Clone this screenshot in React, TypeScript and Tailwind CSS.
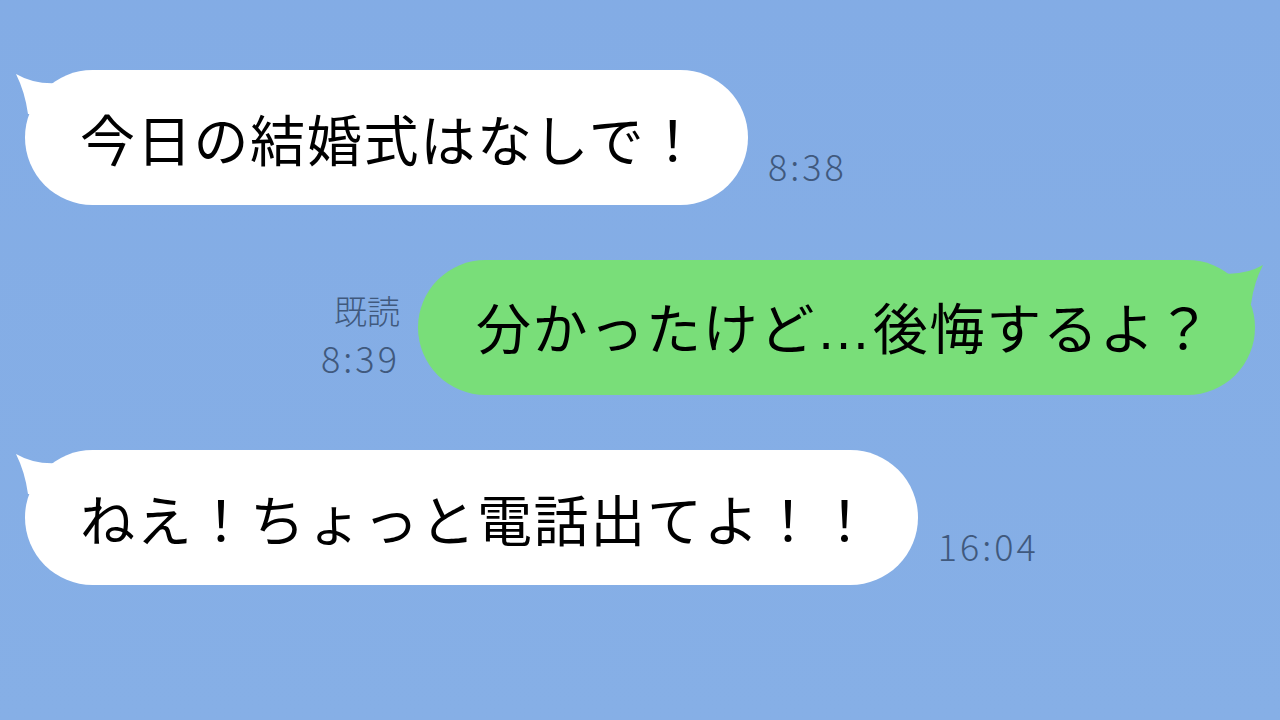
const jp = "font-['Noto_Sans_CJK_JP','Noto_Sans',sans-serif]";

function TailLeft({ color }: { color: string }) {
  return (
    <svg className="absolute left-[-10px] top-0" width="50" height="50" viewBox="0 0 50 50">
      <path d="M1 4 Q10 22 13 44 L44 44 L44 13 Q20 15 1 4 Z" fill={color} />
    </svg>
  );
}

function TailRight({ color }: { color: string }) {
  return (
    <svg className="absolute right-[-9px] top-0" width="50" height="50" viewBox="0 0 50 50">
      <path d="M49 5 Q40 22 37 44 L6 44 L6 13 Q30 16 49 5 Z" fill={color} />
    </svg>
  );
}

function Bubble({ children, side, pl, pr }: { children: React.ReactNode; side: 'left' | 'right'; pl: string; pr: string }) {
  const isLeft = side === 'left';
  return (
    <div
      className={`relative h-[135px] shrink-0 rounded-full flex items-center text-[55px] tracking-[1.7px] leading-none text-black ${jp} ${
        isLeft ? 'bg-white' : 'bg-[#79de79]'
      } ${pl} ${pr}`}
    >
      {isLeft ? <TailLeft color="#ffffff" /> : <TailRight color="#79de79" />}
      <span className="relative whitespace-nowrap">{children}</span>
    </div>
  );
}

function Time({ t }: { t: string }) {
  return <span className={`text-[36px] leading-none text-[#40597d] tracking-[3px] font-light ${jp}`}>{t}</span>;
}

export default function App() {
  return (
    <div className="w-[1280px] h-[720px] overflow-hidden bg-gradient-to-b from-[#83ace5] to-[#86afe6] pt-[70px] flex flex-col gap-[55px]">
      {/* incoming */}
      <div className="flex items-end pl-[25px]">
        <Bubble side="left" pl="pl-[55px]" pr="pr-[46px]">今日の結婚式はなしで！</Bubble>
        <div className="ml-[20px] mb-[18px]">
          <Time t="8:38" />
        </div>
      </div>

      {/* outgoing */}
      <div className="flex items-end justify-end pr-[25px]">
        <div className="mr-[18px] mb-[20px] flex flex-col items-end gap-[12px]">
          <span className={`text-[33px] leading-none text-[#40597d] font-light ${jp}`}>既読</span>
          <Time t="8:39" />
        </div>
        <Bubble side="right" pl="pl-[58px]" pr="pr-[42px]">
          分かったけど<span className="font-['Liberation_Sans',sans-serif]">…</span>後悔するよ？
        </Bubble>
      </div>

      {/* incoming */}
      <div className="flex items-end pl-[25px]">
        <Bubble side="left" pl="pl-[55px]" pr="pr-[44px]">ねえ！ちょっと電話出てよ！！</Bubble>
        <div className="ml-[20px] mb-[18px]">
          <Time t="16:04" />
        </div>
      </div>
    </div>
  );
}
